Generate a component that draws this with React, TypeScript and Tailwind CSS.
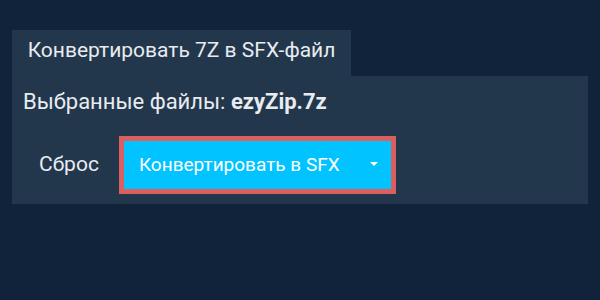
import React from "react";

export default function App() {
  return (
    <div
      className="w-[600px] h-[300px] bg-[#10233a] pt-[30px] px-[12px] text-[#e8ecf0]"
      style={{ fontFamily: "Roboto, 'Noto Sans', sans-serif" }}
    >
      <div className="inline-flex h-[46px] w-[339px] items-center justify-center bg-[#23374c] pb-[5px] text-[21px]">
        Конвертировать 7Z в SFX-файл
      </div>
      <div className="h-[128px] w-[576px] bg-[#23374c] px-[11px] pt-[10px]">
        <div className="text-[22px] leading-[32px]">
          Выбранные файлы: <span className="font-bold">ezyZip.7z</span>
        </div>
        <div className="mt-[18px] flex items-center">
          <button className="ml-[16px] mr-[20px] text-[21px] text-[#e8ecf0]">Сброс</button>
          <div className="border-[5px] border-[#d9605f]">
            <button className="flex h-[48px] w-[267px] items-center bg-[#00c3ff] pl-[15px] pr-[12px] text-[19px] text-white">
              <span className="flex-1 text-left">Конвертировать в SFX</span>
              <svg width="10" height="6" viewBox="0 0 10 6" className="mb-[2px]">
                <path d="M1 1h8L5 5z" fill="white" />
              </svg>
            </button>
          </div>
        </div>
      </div>
    </div>
  );
}
